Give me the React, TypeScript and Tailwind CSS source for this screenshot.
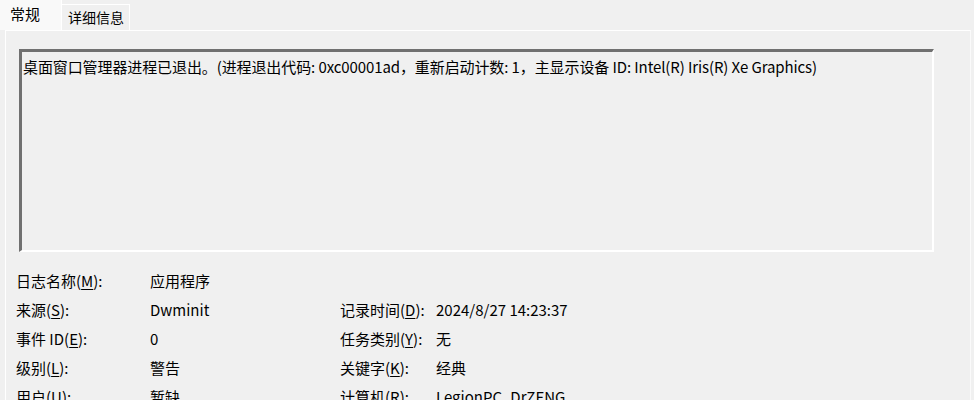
const font = { fontFamily: '"Noto Sans CJK SC", "Noto Sans", sans-serif' };

type Field = { label: string; key: string; value: string };

const left: Field[] = [
  { label: '日志名称', key: 'M', value: '应用程序' },
  { label: '来源', key: 'S', value: 'Dwminit' },
  { label: '事件 ID', key: 'E', value: '0' },
  { label: '级别', key: 'L', value: '警告' },
  { label: '用户', key: 'U', value: '暂缺' },
];

const right: (Field | null)[] = [
  null,
  { label: '记录时间', key: 'D', value: '2024/8/27 14:23:37' },
  { label: '任务类别', key: 'Y', value: '无' },
  { label: '关键字', key: 'K', value: '经典' },
  { label: '计算机', key: 'R', value: 'LegionPC_DrZENG' },
];

function Label({ f }: { f: Field }) {
  return (
    <span>
      {f.label}(<span className="underline underline-offset-2">{f.key}</span>):
    </span>
  );
}

export default function App() {
  return (
    <div
      className="w-[974px] h-[400px] overflow-hidden bg-[#f0f0f0] text-black text-[14px] flex flex-col"
      style={font}
    >
      {/* tabs */}
      <div className="flex items-end h-[30px] shrink-0">
        <div className="h-[30px] w-[62px] bg-[#f9f9f9] border-r border-white pl-[10px] pt-[4px] leading-[20px] text-[15px]">
          常规
        </div>
        <div className="h-[26px] w-[68px] border-t border-r border-white bg-[#f0f0f0] pl-[6px] pt-[2px] leading-[20px]">
          详细信息
        </div>
      </div>

      {/* panel */}
      <div className="flex-1 ml-[5px] mr-[3px] border-l border-t border-white border-r border-r-[#fafafa] pl-[10px] pt-[18px]">
        <div className="ml-[3px] w-[915px] h-[203px] border-t-[3px] border-l-[3px] border-[#707070] border-b-2 border-r-2 border-b-white border-r-white pl-[1px] pt-[5px] leading-[20px] text-[15px] tracking-[-0.1px]">
          桌面窗口管理器进程已退出。(进程退出代码: 0xc00001ad，重新启动计数: 1，主显示设备 ID: Intel(R) Iris(R) Xe Graphics)
        </div>

        <div className="mt-[15px] grid grid-cols-[134px_190px_96px_1fr] auto-rows-[29px] items-center text-[15px]">
          {left.map((f, i) => {
            const r = right[i];
            return (
              <div key={f.key} className="contents">
                <Label f={f} />
                <span>{f.value}</span>
                {r ? <Label f={r} /> : <span />}
                <span>{r ? r.value : ''}</span>
              </div>
            );
          })}
        </div>
      </div>
    </div>
  );
}
